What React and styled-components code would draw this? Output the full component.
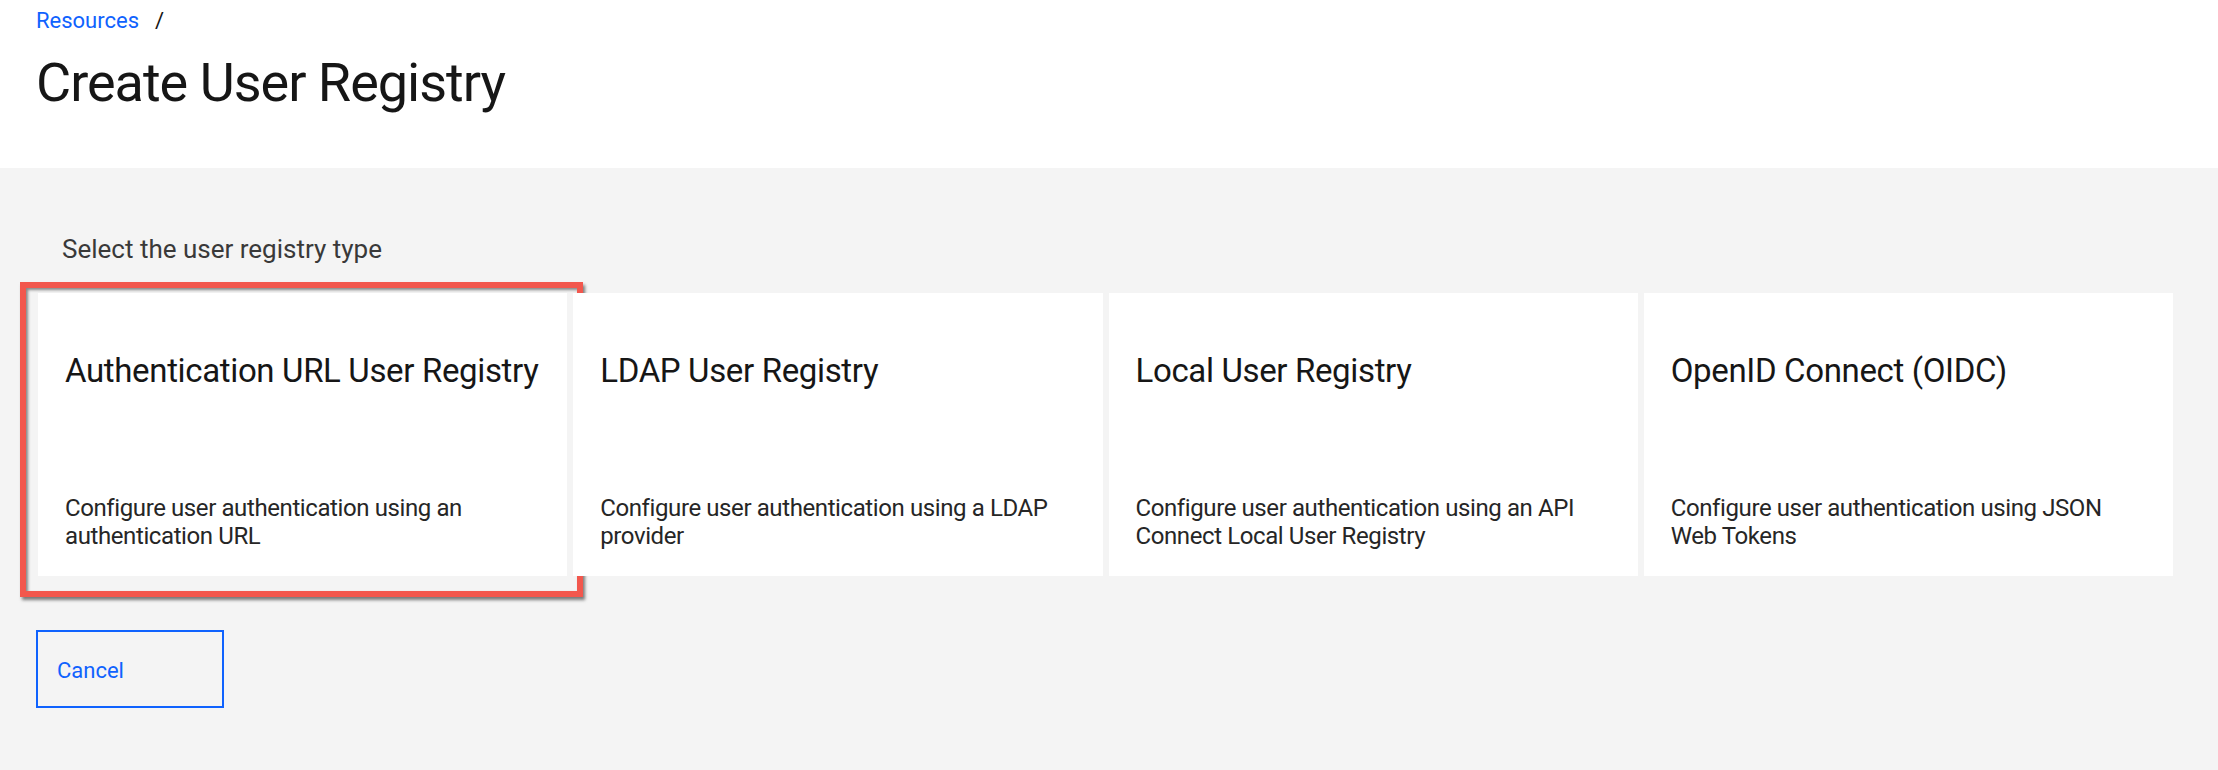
import React from "react";
import styled, { createGlobalStyle } from "styled-components";

const GlobalStyle = createGlobalStyle`
    html, body {
        margin: 0;
        padding: 0;
        background: #f4f4f4;
        font-family: Roboto, "Liberation Sans", Arial, sans-serif;
        color: #161616;
    }
    * {
        box-sizing: border-box;
    }
`

const Page = styled.div`
    width: 100%;
    min-height: 770px;
    background: #f4f4f4;
`

const Header = styled.header`
    background: #ffffff;
    height: 168px;
    padding: 7px 36px 0;
`

const Breadcrumb = styled.nav`
    display: flex;
    align-items: center;
    gap: 16px;
    font-size: 22px;
    line-height: 27px;

    a {
        color: #0f62fe;
        text-decoration: none;
    }

    span {
        color: #161616;
    }
`

const Title = styled.h1`
    margin: 17px 0 0;
    font-size: 54px;
    line-height: 64px;
    font-weight: 400;
    letter-spacing: -1px;
`

const Main = styled.main`
    padding: 66px 45px 0 38px;
`

const Label = styled.p`
    margin: 0 0 28px 24px;
    font-size: 26px;
    line-height: 31px;
    color: #393939;
`

const Tiles = styled.div`
    display: grid;
    grid-template-columns: repeat(4, 1fr);
    gap: 6px;
`

const Tile = styled.div`
    position: relative;
    height: 283px;
    background: #ffffff;
    padding: 58px 12px 26px 27px;
    display: flex;
    flex-direction: column;
    justify-content: space-between;
    cursor: pointer;

    ${(p) => p.highlighted && `
        &::after {
            content: "";
            position: absolute;
            top: -11px;
            left: -18px;
            right: -16px;
            bottom: -21px;
            border: 6px solid #f2574d;
            box-shadow: 2px 3px 3px rgba(0, 0, 0, 0.5), inset 2px 2px 3px rgba(0, 0, 0, 0.45);
            pointer-events: none;
        }
    `}
`

const TileTitle = styled.h2`
    margin: 0;
    font-size: 33px;
    line-height: 40px;
    font-weight: 400;
    letter-spacing: -0.35px;
    color: #161616;
`

const TileText = styled.p`
    margin: 0;
    padding-right: 14px;
    font-size: 24px;
    line-height: 27.5px;
    letter-spacing: -0.4px;
    color: #262626;
`

const CancelButton = styled.button`
    display: flex;
    align-items: flex-start;
    width: 188px;
    height: 78px;
    margin: 54px 0 0 -2px;
    padding: 25px 19px 0;
    background: transparent;
    border: 2px solid #0f62fe;
    border-radius: 0;
    color: #0f62fe;
    font-family: inherit;
    font-size: 22px;
    line-height: 27px;
    cursor: pointer;
`

const registries = [
    {
        title: "Authentication URL User Registry",
        text: "Configure user authentication using an authentication URL",
        highlighted: true
    },
    {
        title: "LDAP User Registry",
        text: "Configure user authentication using a LDAP provider"
    },
    {
        title: "Local User Registry",
        text: "Configure user authentication using an API Connect Local User Registry"
    },
    {
        title: "OpenID Connect (OIDC)",
        text: "Configure user authentication using JSON Web Tokens"
    }
]

const App = () => {
    return (
        <Page>
            <GlobalStyle />
            <Header>
                <Breadcrumb>
                    <a href="#">Resources</a>
                    <span>/</span>
                </Breadcrumb>
                <Title>Create User Registry</Title>
            </Header>

            <Main>
                <Label>Select the user registry type</Label>
                <Tiles>
                    {registries.map((reg, index) => {
                        return (
                            <Tile key={index} highlighted={reg.highlighted}>
                                <TileTitle>{reg.title}</TileTitle>
                                <TileText>{reg.text}</TileText>
                            </Tile>
                        )
                    })}
                </Tiles>
                <CancelButton>Cancel</CancelButton>
            </Main>
        </Page>
    )
}

export default App;
